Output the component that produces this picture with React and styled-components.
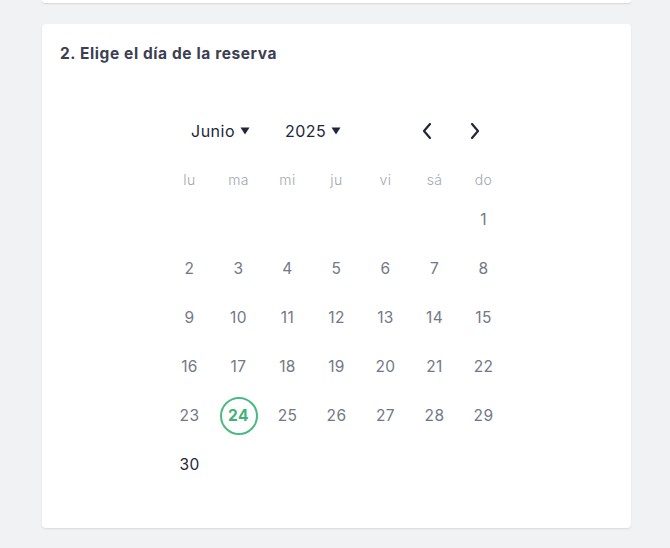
import React from 'react'
import styled, { createGlobalStyle } from 'styled-components'

const GlobalStyle = createGlobalStyle`
  html, body {
    margin: 0;
    padding: 0;
    background: #f1f2f4;
    font-family: Inter, 'Noto Sans', sans-serif;
  }
`

const weekdays = ['lu', 'ma', 'mi', 'ju', 'vi', 'sá', 'do']

// June 2025 starts on Sunday
const buildCells = () => {
  const cells = Array(6).fill(null)
  for (let d = 1; d <= 30; d++) cells.push(d)
  return cells
}

const CaretIcon = () => (
  <svg width="10" height="8" viewBox="0 0 10 8">
    <path d="M0.5 0.5 H9.5 L5 7.5 Z" fill="#22263a" />
  </svg>
)

const App = () => {
  const cells = buildCells()
  const selected = 24
  const today = 30

  return (
    <>
      <GlobalStyle />
      <Page>
        <TopCard />
        <Card>
          <Title>2. Elige el día de la reserva</Title>
          <Calendar>
            <Header>
              <Select $width={94}>
                Junio <CaretIcon />
              </Select>
              <Select $width={60}>
                2025 <CaretIcon />
              </Select>
              <Nav>
                <NavButton aria-label="anterior">
                  <svg width="14" height="18" viewBox="0 0 14 18" fill="none">
                    <path d="M10 2 L4 9 L10 16" stroke="#22263a" strokeWidth="2.2" strokeLinecap="round" strokeLinejoin="round" />
                  </svg>
                </NavButton>
                <NavButton aria-label="siguiente">
                  <svg width="14" height="18" viewBox="0 0 14 18" fill="none">
                    <path d="M4 2 L10 9 L4 16" stroke="#22263a" strokeWidth="2.2" strokeLinecap="round" strokeLinejoin="round" />
                  </svg>
                </NavButton>
              </Nav>
            </Header>
            <Grid>
              {weekdays.map(w => (
                <Weekday key={w}>{w}</Weekday>
              ))}
            </Grid>
            <Grid>
              {cells.map((d, i) => (
                <Day key={i}>
                  {d && (
                    <DayNumber $selected={d === selected} $today={d === today}>
                      {d}
                    </DayNumber>
                  )}
                </Day>
              ))}
            </Grid>
          </Calendar>
        </Card>
      </Page>
    </>
  )
}

export default App

const Page = styled.div`
  display: flex;
  flex-direction: column;
  gap: 21px;
  padding: 0 39px 20px 42px;
`

const TopCard = styled.div`
  height: 3px;
  background: #fff;
  border-radius: 0 0 4px 4px;
  box-shadow: 0 1px 2px rgba(0, 0, 0, 0.12);
`

const Card = styled.div`
  height: 504px;
  box-sizing: border-box;
  background: #fff;
  border-radius: 4px;
  box-shadow: 0 1px 2px rgba(0, 0, 0, 0.1);
  padding: 20px 18px;
`

const Title = styled.h2`
  margin: 0;
  font-size: 15.5px;
  line-height: 20px;
  font-weight: 700;
  letter-spacing: 0.6px;
  color: #3b4052;
`

const Calendar = styled.div`
  width: 343px;
  margin: 43px auto 0;
`

const Header = styled.div`
  display: flex;
  align-items: center;
  height: 48px;
  padding-left: 26px;
`

const Select = styled.div`
  display: flex;
  align-items: center;
  gap: 5px;
  width: ${p => p.$width}px;
  font-size: 16px;
  letter-spacing: 0.5px;
  color: #22263a;
`

const Nav = styled.div`
  display: flex;
  gap: 34px;
  margin-left: auto;
  margin-right: 26px;
`

const NavButton = styled.button`
  border: 0;
  background: none;
  padding: 0;
  display: flex;
  cursor: pointer;
`

const Grid = styled.div`
  display: grid;
  grid-template-columns: repeat(7, 49px);
`

const Weekday = styled.div`
  height: 32px;
  margin-top: 8px;
  display: flex;
  align-items: center;
  justify-content: center;
  font-size: 14px;
  font-weight: 300;
  letter-spacing: 0.4px;
  color: #a3a6b0;
`

const Day = styled.div`
  height: 49px;
  display: flex;
  align-items: center;
  justify-content: center;
`

const DayNumber = styled.span`
  width: 38px;
  height: 38px;
  box-sizing: border-box;
  border-radius: 50%;
  display: flex;
  align-items: center;
  justify-content: center;
  font-size: 15.5px;
  letter-spacing: 0.4px;
  color: ${p => (p.$selected ? '#3fb27a' : p.$today ? '#22263a' : '#747886')};
  font-weight: ${p => (p.$selected ? 700 : 400)};
  border: ${p => (p.$selected ? '2px solid #4cb884' : '0')};
`
